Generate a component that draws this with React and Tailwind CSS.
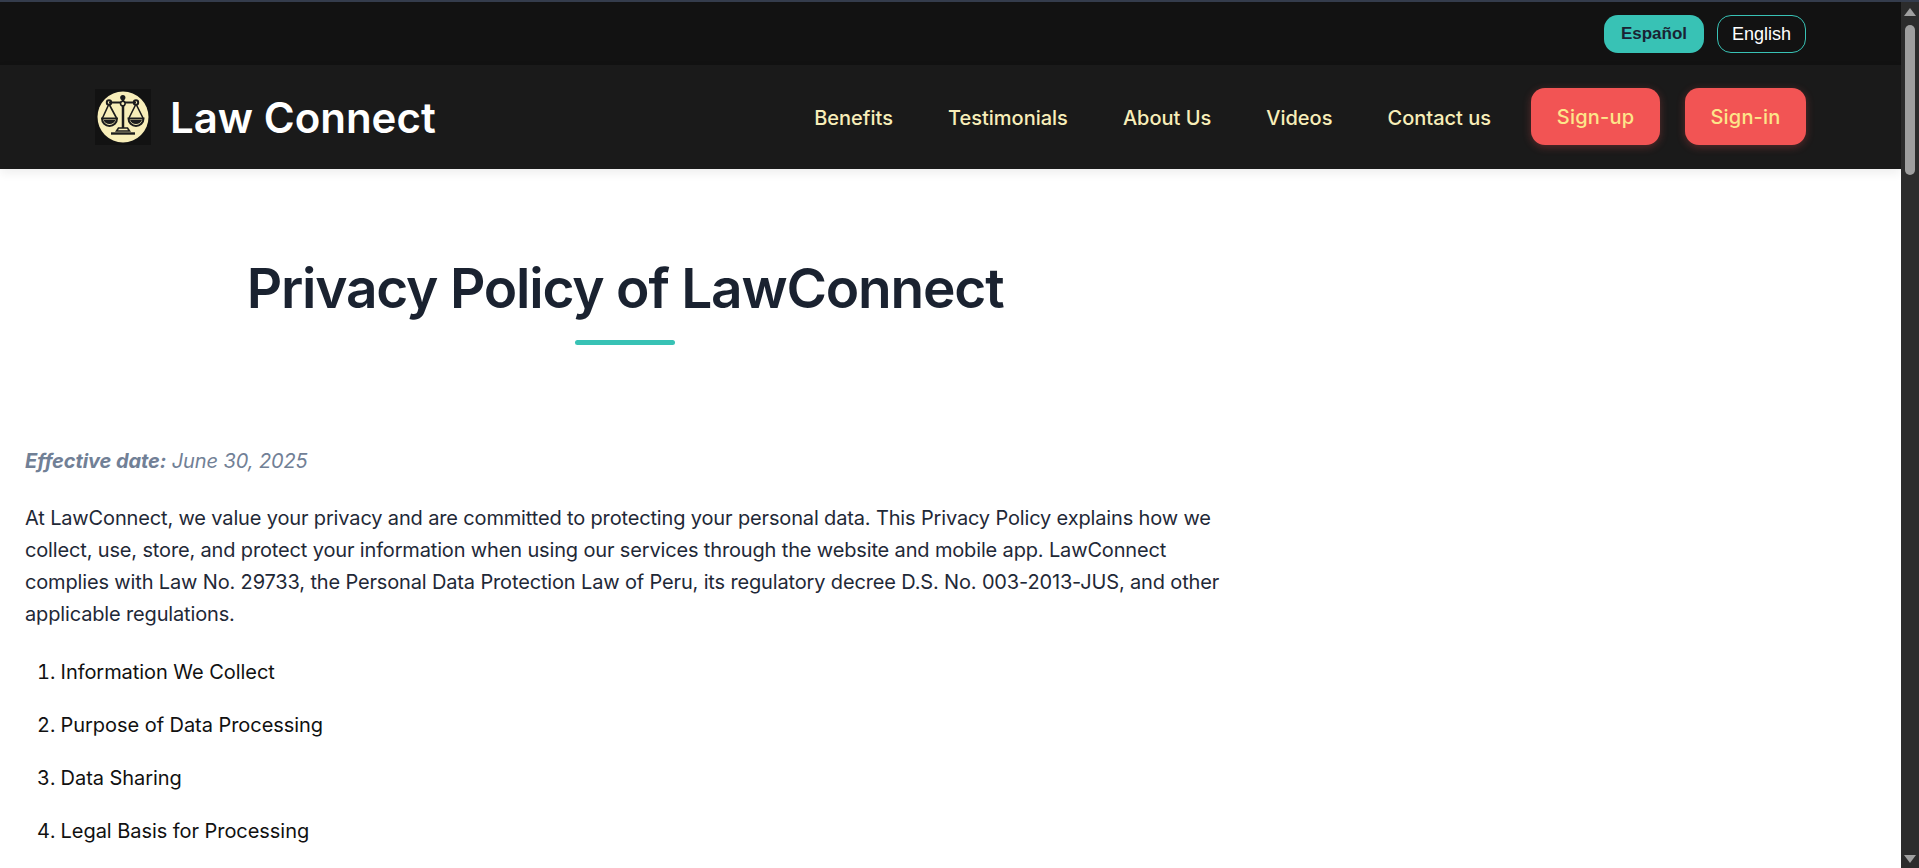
import React from 'react';

const navLinks = ['Benefits', 'Testimonials', 'About Us', 'Videos', 'Contact us'];
const sections = ['Information We Collect', 'Purpose of Data Processing', 'Data Sharing', 'Legal Basis for Processing'];

const ScaleLogo = () => (
  <div className="w-14 h-14 bg-[#121212] shrink-0">
    <svg viewBox="0 0 56 56" className="w-14 h-14">
      <circle cx="28" cy="28" r="25.5" fill="#f8eeb9" />
      <g fill="none" stroke="#1c1c1c" strokeWidth="2">
        <path d="M28 9V39" strokeWidth="2.5" />
        <path d="M14 13.5H41" strokeWidth="2" />
        <circle cx="14" cy="13.5" r="2.2" />
        <circle cx="41" cy="13.5" r="2.2" />
        <path d="M13.5 16L7.5 29M14.5 16L21.5 29" strokeWidth="1.6" />
        <path d="M41.5 16L48 29M40.5 16L34 29" strokeWidth="1.6" />
        <path d="M7 29.5a7.5 7.5 0 0 0 15 0Z" />
        <path d="M33.5 29.5a7.5 7.5 0 0 0 15 0Z" />
      </g>
      <circle cx="27.8" cy="8.5" r="2.6" fill="#1c1c1c" />
      <circle cx="27.8" cy="14.5" r="2.3" fill="#f8eeb9" stroke="#1c1c1c" strokeWidth="1.6" />
      <path d="M8.5 31h12a6.5 6.5 0 0 1-12 0ZM35 31h12a6.5 6.5 0 0 1-12 0Z" fill="#1c1c1c" />
      <path d="M23.5 39h9l2 3H21.5Z" fill="none" stroke="#1c1c1c" strokeWidth="1.6" />
      <path d="M16 44.5H40" stroke="#1c1c1c" strokeWidth="2.4" />
    </svg>
  </div>
);

const Scrollbar = () => (
  <div className="w-[18px] shrink-0 bg-[#2c2c2c] flex flex-col items-center pt-[6px] pb-[5px]">
    <div className="w-0 h-0 border-x-[6px] border-x-transparent border-b-[8px] border-b-[#a0a0a0]" />
    <div className="w-[10px] h-[150px] mt-[9px] rounded-full bg-[#9f9f9f]" />
    <div className="flex-1" />
    <div className="w-0 h-0 border-x-[6px] border-x-transparent border-t-[8px] border-t-[#a0a0a0]" />
  </div>
);

export default function App() {
  return (
    <div className="h-screen overflow-hidden flex flex-col bg-white font-['Inter',sans-serif]">
      <div className="h-[2px] shrink-0 bg-[#343c4c]" />
      <div className="flex flex-1 min-h-0">
        <div className="flex-1 min-w-0 overflow-hidden">
          {/* Language bar */}
          <div className="h-[63px] bg-[#121212] flex items-start justify-end gap-[13px] pt-[13px] pr-[95px]">
            <button className="w-[100px] h-[38px] rounded-[14px] bg-[#38c2b5] text-[#1a2333] text-[17px] font-bold font-['Liberation_Sans',sans-serif]">
              Español
            </button>
            <button className="w-[89px] h-[38px] rounded-[14px] border border-[#38c2b5] text-white text-[18px] font-['Liberation_Sans',sans-serif]">
              English
            </button>
          </div>

          {/* Nav */}
          <header className="h-[104px] bg-[#1a1a1a] flex items-center justify-between pl-[95px] pr-[95px] pb-[1px] shadow-[0_4px_10px_rgba(0,0,0,0.07)] relative">
            <div className="flex items-center gap-[19px]">
              <ScaleLogo />
              <span className="text-white text-[42px] font-semibold pt-[2px]">Law Connect</span>
            </div>
            <nav className="flex items-center">
              <div className="flex items-center gap-[55px] mr-[40px] pt-[2px]">
                {navLinks.map((link) => (
                  <a key={link} className="text-[#f8eeb9] text-[20px] font-medium">{link}</a>
                ))}
              </div>
              <button className="w-[129px] h-[57px] rounded-[14px] bg-[#f25454] text-[#fde68a] text-[20px] font-medium tracking-[0.2px] shadow-[0_2px_8px_rgba(242,84,84,0.3)] mr-[25px]">
                Sign-up
              </button>
              <button className="w-[121px] h-[57px] rounded-[14px] bg-[#f25454] text-[#fde68a] text-[20px] font-medium tracking-[0.2px] shadow-[0_2px_8px_rgba(242,84,84,0.3)]">
                Sign-in
              </button>
            </nav>
          </header>

          {/* Content */}
          <main className="w-[1250px] px-[25px]">
            <div className="flex flex-col items-center pt-[83px]">
              <h1 className="text-[55px] leading-[72px] font-semibold text-[#1a2230] tracking-[-1.2px]">Privacy Policy of LawConnect</h1>
              <div className="w-[100px] h-[5px] rounded-full bg-[#38c2b5] mt-[16px]" />
            </div>
            <p className="mt-[100px] text-[20px] leading-[32px] italic text-[#718096] tracking-[-0.1px]">
              <strong className="font-bold">Effective date:</strong> June 30, 2025
            </p>
            <p className="mt-[25px] text-[20px] leading-[32px] text-[#1f2937] tracking-[-0.15px]">
              At LawConnect, we value your privacy and are committed to protecting your personal data. This Privacy Policy explains how we<br />
              collect, use, store, and protect your information when using our services through the website and mobile app. LawConnect<br />
              complies with Law No. 29733, the Personal Data Protection Law of Peru, its regulatory decree D.S. No. 003-2013-JUS, and other<br />
              applicable regulations.
            </p>
            <ol className="mt-[26px] pl-[12px] list-decimal list-inside flex flex-col gap-[21px] text-[20px] leading-[32px] text-[#111111] tracking-[-0.05px]">
              {sections.map((s) => (
                <li key={s}>{s}</li>
              ))}
            </ol>
          </main>
        </div>
        <Scrollbar />
      </div>
    </div>
  );
}
